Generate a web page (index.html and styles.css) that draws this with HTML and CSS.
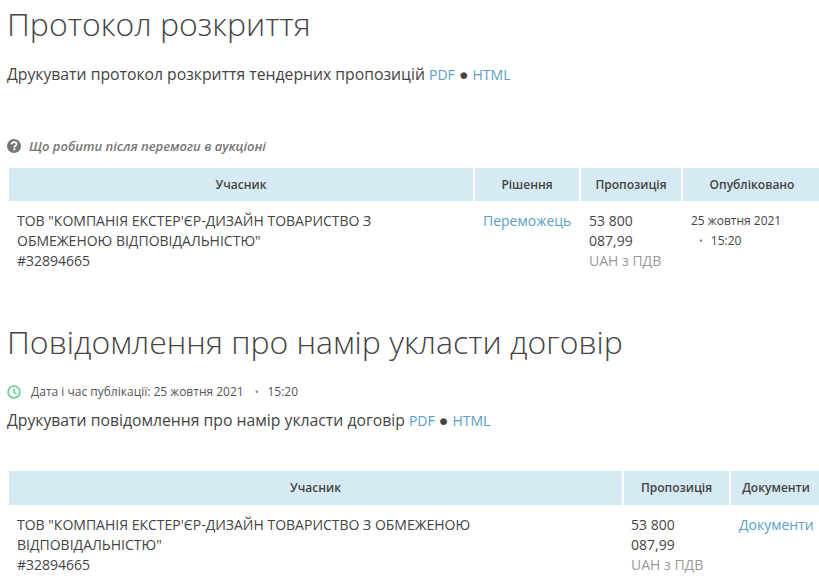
FILE: index.html
```html
<!DOCTYPE html>
<html lang="uk">
<head>
<meta charset="utf-8">
<title>Протокол розкриття</title>
<link rel="stylesheet" href="styles.css">
</head>
<body>
<main class="page">
  <h2 class="title">Протокол розкриття</h2>
  <p class="print print-first">Друкувати протокол розкриття тендерних пропозицій <a href="#">PDF</a> ● <a href="#">HTML</a></p>
  <p class="help">
    <svg class="help-icon" viewBox="0 0 14 14" aria-hidden="true"><circle cx="7" cy="7" r="7" fill="#777"/><path d="M4.6 5.4C4.7 4 5.8 3.2 7.1 3.2c1.4 0 2.4.8 2.4 2 0 1.8-2.2 1.7-2.2 3.2" fill="none" stroke="#fff" stroke-width="1.7"/><rect x="6.3" y="9.3" width="2" height="1.9" fill="#fff"/></svg>
    <a href="#">Що робити після перемоги в аукціоні</a>
  </p>
  <table class="grid grid-first">
    <colgroup><col class="c1"><col class="c2"><col class="c3"><col class="c4"></colgroup>
    <thead><tr><th>Учасник</th><th>Рішення</th><th>Пропозиція</th><th>Опубліковано</th></tr></thead>
    <tbody><tr>
      <td>ТОВ "КОМПАНІЯ ЕКСТЕР'ЄР-ДИЗАЙН ТОВАРИСТВО З ОБМЕЖЕНОЮ ВІДПОВІДАЛЬНІСТЮ"<br>#32894665</td>
      <td><a href="#">Переможець</a></td>
      <td>53 800 087,99<br><span class="muted">UAH з ПДВ</span></td>
      <td class="date">25 жовтня 2021<span class="time"><span class="dot">•</span>15:20</span></td>
    </tr></tbody>
  </table>
  <h2 class="title title-second">Повідомлення про намір укласти договір</h2>
  <p class="published">
    <svg class="clock" viewBox="0 0 14 14" aria-hidden="true"><circle cx="7" cy="7" r="5.9" fill="none" stroke="#6fcf97" stroke-width="1.8"/><path d="M7 3.4V7.4L9.6 9.2" fill="none" stroke="#6fcf97" stroke-width="1.6"/></svg>
    <span>Дата і час публікації: 25 жовтня 2021</span><span class="dot dot-wide">•</span><span>15:20</span>
  </p>
  <p class="print">Друкувати повідомлення про намір укласти договір <a href="#">PDF</a> ● <a href="#">HTML</a></p>
  <table class="grid grid-second">
    <colgroup><col class="d1"><col class="d2"><col class="d3"></colgroup>
    <thead><tr><th>Учасник</th><th>Пропозиція</th><th>Документи</th></tr></thead>
    <tbody><tr>
      <td>ТОВ "КОМПАНІЯ ЕКСТЕР'ЄР-ДИЗАЙН ТОВАРИСТВО З ОБМЕЖЕНОЮ ВІДПОВІДАЛЬНІСТЮ"<br>#32894665</td>
      <td>53 800 087,99<br><span class="muted">UAH з ПДВ</span></td>
      <td><a href="#">Документи</a></td>
    </tr></tbody>
  </table>
</main>
</body>
</html>
```
FILE: styles.css
```css
html, body { margin: 0; padding: 0; height: 587px; overflow: hidden; background: #fff; }
body { font-family: "Open Sans", sans-serif; font-size: 14px; line-height: 20px; color: #444; }
.page { width: 819px; padding-left: 7px; box-sizing: border-box; }
a { color: #5b9ec4; text-decoration: none; }
.title { margin: 0; padding-top: 4px; font-size: 32px; line-height: 40px; font-weight: 300; color: #444; }
.title-second { padding-top: 0; margin-top: 41px; }
.print { margin: 0; font-size: 15.75px; line-height: 20px; white-space: nowrap; }
.print a { font-size: 14px; }
.print-first { margin-top: 20px; }
.help { margin: 51px 0 0; display: flex; align-items: center; gap: 8px; font-size: 13px; line-height: 20px; font-style: italic; font-weight: 600; }
.help a { color: #777; }
.help-icon { width: 14px; height: 14px; }
.published { margin: 20px 0 0; display: flex; align-items: center; font-size: 12px; line-height: 20px; color: #555; }
.clock { width: 14px; height: 14px; margin-right: 10px; }
.published + .print { margin-top: 8px; }
.grid { border-collapse: separate; border-spacing: 2px; table-layout: fixed; width: 814px; }
.grid-first { margin-top: 10px; }
.grid-second { margin-top: 38px; }
.c1 { width: 464px; } .c2 { width: 104px; } .c3 { width: 100px; } .c4 { width: 138px; }
.d1 { width: 613px; } .d2 { width: 105px; } .d3 { width: 90px; }
th { height: 33px; padding: 0; background: #d5eaf2; font-size: 12px; font-weight: 600; color: #444; text-align: center; }
.grid-second th { height: 34px; }
td { padding: 8px; vertical-align: top; text-align: left; }
.grid-second td:nth-child(2) { padding-left: 7px; }
.muted { color: #999; }
.date { font-size: 12px; line-height: 20px; }
.time { display: block; padding-left: 8px; }
.dot { color: #6f8f80; font-size: 10px; margin-right: 8px; }
.dot-wide { margin: 0 9px 0 11px; }
```
